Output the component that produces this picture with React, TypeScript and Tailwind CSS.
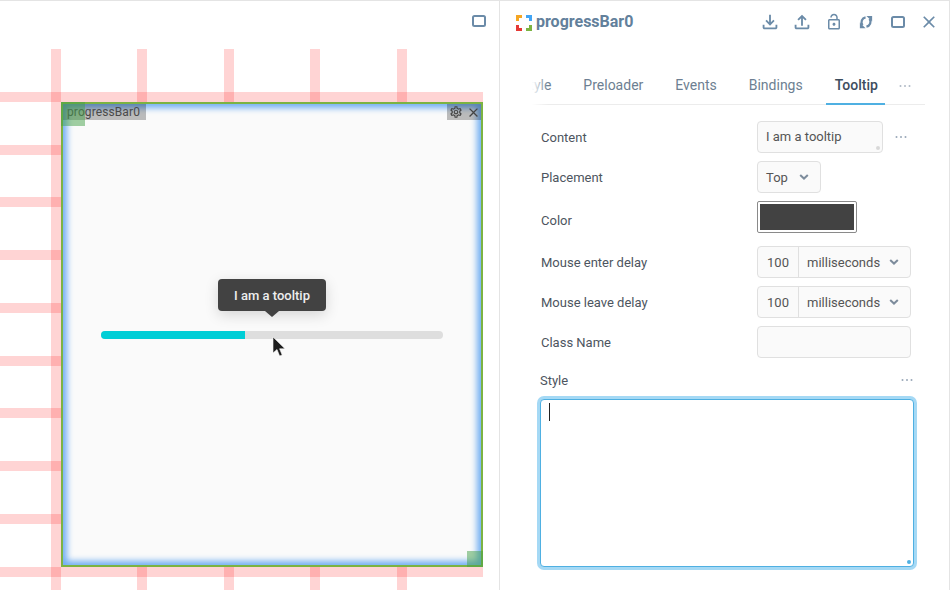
import { MdClose, MdOutlineFileDownload, MdOutlineFileUpload, MdOutlineLockOpen, MdOutlineSettings } from "react-icons/md";

const vertical = [51, 137, 224, 310, 397];
const horizontal = [92, 145, 197, 250, 303, 356, 408, 461, 514, 567];

function Dots({ className }: { className: string }) {
  return (
    <svg width="12" height="4" viewBox="0 0 12 4" className={className} fill="currentColor">
      <circle cx="1.5" cy="2" r="1" />
      <circle cx="6" cy="2" r="1" />
      <circle cx="10.5" cy="2" r="1" />
    </svg>
  );
}

function Square({ className }: { className: string }) {
  return (
    <svg width="14" height="12" viewBox="0 0 14 12" fill="none" className={className}>
      <rect x="1" y="1" width="12" height="10" rx="1.5" stroke="currentColor" strokeWidth="2" />
    </svg>
  );
}

function Chevron({ className }: { className: string }) {
  return (
    <svg width="10" height="6" viewBox="0 0 10 6" fill="none" className={className}>
      <path d="M1.2 1l3.8 3.6L8.8 1" stroke="#7d8c9c" strokeWidth="2" />
    </svg>
  );
}

function SyncIcon() {
  return (
    <svg width="14" height="14" viewBox="0 0 16 16" fill="none" stroke="currentColor" strokeWidth="2.6">
      <path d="M7.5 2.6A5.6 5.6 0 0 0 4 11.5" />
      <path d="M8.5 13.4A5.6 5.6 0 0 0 12 4.5" />
      <path d="M1 8.5V15h6.5z" stroke="none" fill="currentColor" />
      <path d="M15 7.5V1H8.5z" stroke="none" fill="currentColor" />
    </svg>
  );
}

function Logo() {
  return (
    <svg width="16" height="16" viewBox="0 0 16 16" fill="none" strokeWidth="3" className="mt-px">
      <path d="M1.5 6V1.5H6" stroke="#f5a623" />
      <path d="M10 1.5h4.5V6" stroke="#42a5f5" />
      <path d="M1.5 10v4.5H6" stroke="#e53935" />
      <path d="M10 14.5h4.5V10" stroke="#7cb342" />
    </svg>
  );
}

function Row({ label, labelClass, children }: { label: string; labelClass?: string; children: React.ReactNode }) {
  return (
    <div className="flex h-8 items-center">
      <span className={`w-[216px] text-[13px] text-[#4d5560] ${labelClass ?? "pt-[2px]"}`}>{label}</span>
      {children}
    </div>
  );
}

function DelayField() {
  return (
    <div className="flex h-8 w-[154px] items-center rounded-[4px] border border-[#e0e0e0] bg-[#fafafa] text-[13px] text-[#555]">
      <span className="flex h-full w-[41px] items-center justify-center border-r border-[#e0e0e0] pt-[2px]">100</span>
      <span className="ml-2 pt-[2px]">milliseconds</span>
      <Chevron className="ml-[9px]" />
    </div>
  );
}

export default function App() {
  return (
    <div className="flex h-[590px] w-[950px] overflow-hidden border-t border-[#e4e4e4] bg-white font-['Roboto',sans-serif]">
      {/* canvas */}
      <div className="relative h-full w-[500px] shrink-0 border-r border-[#e4e4e4]">
        <Square className="absolute left-[472px] top-[14px] text-[#6b8ba8]" />
        {vertical.map((x) => (
          <div key={x} className="absolute bottom-0 top-[48px] w-[10px] bg-[#ff0000]/[0.17]" style={{ left: x }} />
        ))}
        {horizontal.map((y) => (
          <div key={y} className="absolute left-0 h-[10px] w-[483px] bg-[#ff0000]/[0.17]" style={{ top: y - 1 }} />
        ))}

        <div className="absolute left-[61px] top-[101px] flex h-[465px] w-[422px] items-center border-2 border-[#7cb342] bg-[#fafafa] px-[38px] shadow-[inset_0_0_6px_4px_#70aef2]">
          <div className="relative h-2 w-full rounded-full bg-[#dedede]">
            <div className="h-2 w-[144px] rounded-l-full bg-[#00ced6]" />
            <div className="absolute left-[117px] top-[-52px] flex h-8 w-[108px] items-center justify-center rounded-[4px] bg-[#424242] pt-[2px] text-[13px] font-medium text-[#eeeeee] shadow-[0_4px_14px_rgba(0,0,0,0.15)]">
              I am a tooltip
              <div className="absolute left-[47px] top-8 h-0 w-0 border-x-[7px] border-t-[6px] border-x-transparent border-t-[#424242]" />
            </div>
            <svg width="14" height="22" viewBox="0 0 14 22" className="absolute left-[171px] top-[5px]">
              <path d="M1 1v16l4-3.5L7.6 20l2.6-1-2.6-6.2H13z" fill="#1c1c1c" stroke="#fafafa" strokeWidth="0.6" />
            </svg>
          </div>
          <div className="absolute left-0 top-0 flex h-4 w-[83px] items-center bg-black/25 pl-1 text-[12px] leading-none tracking-[0.1px] text-[#4a4a4a]">progressBar0</div>
          <div className="absolute right-0 top-0 flex h-4 w-[34px] items-center justify-center gap-[3px] bg-black/25 pl-[2px] text-[#444]">
            <MdOutlineSettings size={14} />
            <MdClose size={15} />
          </div>
          <div className="absolute left-[-2px] top-[-2px] h-6 w-6 bg-[#43a047]/50" />
          <div className="absolute bottom-[-2px] right-[-2px] h-4 w-4 bg-[#43a047]/50" />
        </div>
      </div>

      {/* inspector */}
      <div className="h-full w-[450px] shrink-0 border-r border-[#e4e4e4] text-[#6d7f92]">
        <div className="flex h-[43px] items-center pl-4 pr-[10px]">
          <Logo />
          <span className="-mt-[2px] ml-1 text-[16px] font-bold text-[#62809b]">progressBar0</span>
          <div className="-mt-[2px] ml-auto flex items-center text-[#6b8ba8]">
            <MdOutlineFileDownload size={22} className="mr-[10px]" />
            <MdOutlineFileUpload size={22} className="mr-[12px]" />
            <MdOutlineLockOpen size={18} className="mr-[16px]" />
            <SyncIcon />
            <Square className="ml-[18px]" />
            <MdClose size={20} className="ml-[14px]" />
          </div>
        </div>

        <div className="relative ml-8 mt-[25px] flex h-[36px] w-[393px] items-end overflow-hidden text-[14px]">
          <div className="absolute bottom-0 left-0 h-px w-full bg-[#ececec]" />
          <div className="relative -ml-[20px] flex gap-[14px]">
            {["Style", "Preloader", "Events", "Bindings"].map((tab) => (
              <span key={tab} className="px-[9px] pb-[10px] leading-[20px]">{tab}</span>
            ))}
            <span className="border-b-2 border-[#4fb0e2] pb-[8px] pl-[9px] pr-[7px] font-medium leading-[20px] text-[#3d4d5e]">Tooltip</span>
          </div>
          <Dots className="absolute bottom-[17px] left-[367px] text-[#b0bac6]" />
          <div className="absolute left-0 top-0 h-full w-4 bg-gradient-to-r from-white to-transparent" />
        </div>

        <div className="ml-[41px] mt-4 flex w-[372px] flex-col gap-2">
          <Row label="Content">
            <div className="relative flex h-8 w-[126px] items-center rounded-[4px] border border-[#e0e0e0] bg-[#fafafa] pl-2 text-[13px] text-[#555]">
              I am a tooltip
              <div className="absolute bottom-[2px] right-[2px] h-1 w-1 rounded-full bg-[#d8d8d8]" />
            </div>
            <Dots className="ml-3 text-[#9aa8b8]" />
          </Row>
          <Row label="Placement">
            <div className="flex h-8 w-16 items-center rounded-[4px] border border-[#e0e0e0] bg-[#fafafa] pl-2 text-[13px] text-[#555]">
              <span className="pt-[2px]">Top</span>
              <Chevron className="ml-[11px]" />
            </div>
          </Row>
          <Row label="Color" labelClass="pt-[8px]">
            <div className="h-8 w-[100px] rounded-[2px] border border-[#8a8a8a] bg-white p-[2px]">
              <div className="h-full w-full bg-[#424242]" />
            </div>
          </Row>
          <div className="mt-[5px] flex flex-col gap-2">
            <Row label="Mouse enter delay"><DelayField /></Row>
            <Row label="Mouse leave delay"><DelayField /></Row>
            <Row label="Class Name">
              <div className="h-8 w-[154px] rounded-[4px] border border-[#e0e0e0] bg-[#fafafa]" />
            </Row>
          </div>
        </div>

        <div className="ml-[41px] mt-[14px] flex h-4 w-[372px] items-center justify-between text-[13px] text-[#4d5560]">
          <span className="-ml-px pt-[2px]">Style</span>
          <Dots className="text-[#9aa8b8]" />
        </div>
        <div className="relative ml-[40px] mt-[11px] h-[168px] w-[374px] rounded-[4px] border border-[#4fb0e2] bg-white shadow-[0_0_0_3px_#a5d9f5]">
          <div className="ml-2 mt-[3px] h-[18px] w-px bg-[#222]" />
          <div className="absolute bottom-[2px] right-[2px] h-1 w-1 rounded-full bg-[#4fb0e2]" />
        </div>
      </div>
    </div>
  );
}
